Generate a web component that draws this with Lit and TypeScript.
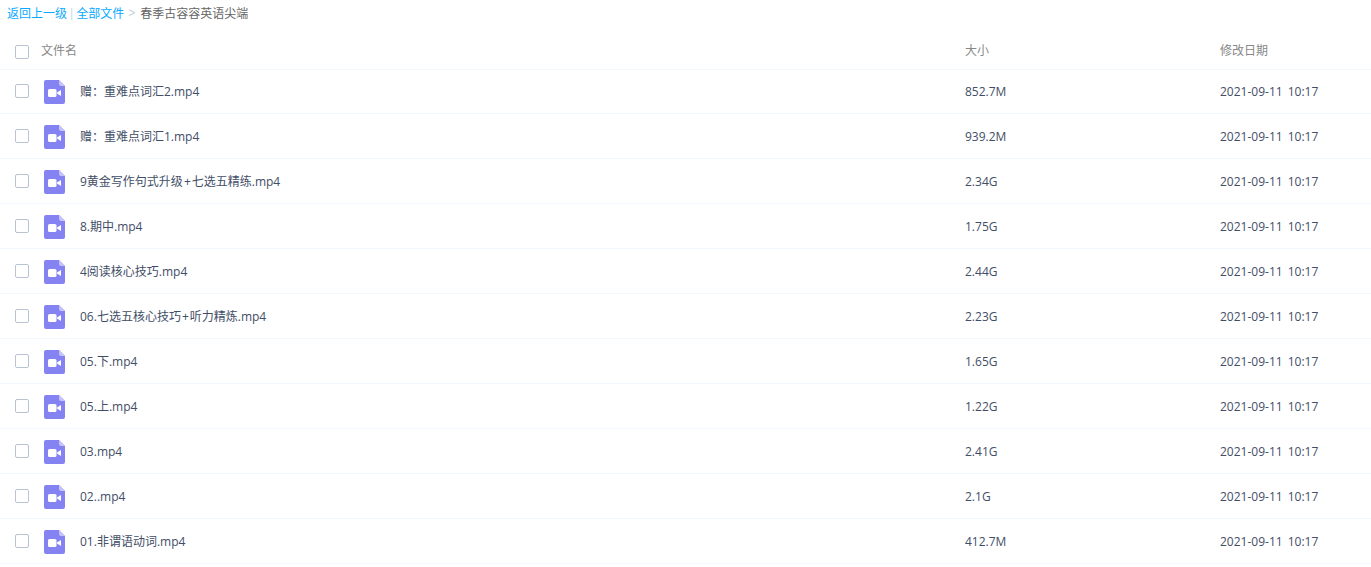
import { LitElement, html, css, svg } from "lit";
import { customElement } from "lit/decorators.js";

const files: [string, string][] = [
  ["赠\uFF1A重难点词汇2.mp4", "852.7M"],
  ["赠\uFF1A重难点词汇1.mp4", "939.2M"],
  ["9黄金写作句式升级+七选五精练.mp4", "2.34G"],
  ["8.期中.mp4", "1.75G"],
  ["4阅读核心技巧.mp4", "2.44G"],
  ["06.七选五核心技巧+听力精炼.mp4", "2.23G"],
  ["05.下.mp4", "1.65G"],
  ["05.上.mp4", "1.22G"],
  ["03.mp4", "2.41G"],
  ["02..mp4", "2.1G"],
  ["01.非谓语动词.mp4", "412.7M"],
];

const icon = svg`<svg class="icon" width="21" height="24" viewBox="0 0 21 24">
  <path d="M2 0H15L21 6V22a2 2 0 0 1-2 2H2a2 2 0 0 1-2-2V2a2 2 0 0 1 2-2Z" fill="#8583f2"/>
  <path d="M15 0L21 6H17a2 2 0 0 1-2-2Z" fill="#c5c4f9"/>
  <rect x="4" y="9" width="8.5" height="8" rx="1.6" fill="#fff"/>
  <path d="M13 12.4L17 10V16L13 13.6Z" fill="#fff"/>
</svg>`;

function nameParts(name: string) {
  const parts = name.split("+");
  return parts.length === 2
    ? html`${parts[0]}<span class="plus">+</span>${parts[1]}`
    : name;
}

@customElement("app-root")
export class AppRoot extends LitElement {
  static styles = css`
    :host {
      display: block;
      width: 1371px;
      height: 567px;
      overflow: hidden;
      background: #fff;
      font-family: "Open Sans", "Noto Sans CJK SC", sans-serif;
      font-size: 12px;
      word-spacing: 2px;
      color: #424e67;
    }
    .crumbs {
      height: 26px;
      display: flex;
      align-items: center;
      padding-left: 7px;
      color: #666;
    }
    .link { color: #09aaff; }
    .sep {
      color: #c4d8ea;
      margin: 0 3px;
      font-family: "Liberation Sans", sans-serif;
    }
    .arrow {
      color: #c4d0dc;
      margin: 0 5px 0 4px;
      font-family: "Liberation Sans", sans-serif;
    }
    .row {
      display: grid;
      box-sizing: border-box;
      grid-template-columns: 44px 36px 885px 255px 1fr;
      align-items: center;
      height: 45px;
      border-bottom: 1px solid #f2f6fd;
    }
    .head {
      box-sizing: border-box;
      height: 43px;
      padding-top: 4px;
      color: #888;
      grid-template-columns: 41px 924px 255px 1fr;
      border-bottom: 0;
      box-shadow: 0 1px 0 #f2f6fd;
    }
    .head .box { margin-top: 5px; }
    .box {
      box-sizing: border-box;
      width: 14px;
      height: 14px;
      margin-left: 15px;
      border: 1px solid #b8c4d4;
      border-radius: 2px;
      background: #fff;
    }
    .icon { display: block; margin-top: 2px; }
    .name { color: #424e67; }
    .plus { padding: 0 1px; }
  `;

  render() {
    return html`
      <div class="crumbs">
        <span class="link">返回上一级</span><span class="sep">|</span><span class="link">全部文件</span><span class="arrow">&gt;</span><span>春季古容容英语尖端</span>
      </div>
      <div class="row head">
        <span class="box"></span><span>文件名</span><span>大小</span><span>修改日期</span>
      </div>
      ${files.map(
        ([name, size]) => html`
          <div class="row">
            <span class="box"></span>
            ${icon}
            <span class="name">${nameParts(name)}</span>
            <span>${size}</span>
            <span>2021-09-11 10:17</span>
          </div>
        `
      )}
    `;
  }
}
